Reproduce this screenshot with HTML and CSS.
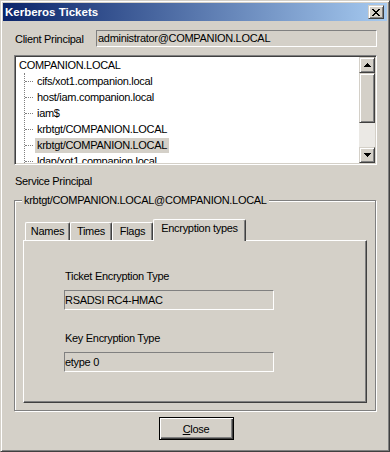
FILE: index.html
```html
<!doctype html>
<html lang="en">
<head>
	<meta charset="UTF-8">
	<title>Kerberos Tickets</title>
	<link rel="stylesheet" href="styles.css">
</head>
<body>
	<div class="window">
	  <div class="titlebar">
	    <span class="titlebar__text">Kerberos Tickets</span>
	    <button class="titlebar__close">
	      <svg width="8" height="7" viewBox="0 0 8 7" shape-rendering="crispEdges"><path d="M0 0h2v1h1v1h2v-1h1v-1h2v1h-1v1h-1v1h-1v1h1v1h1v1h1v1h-2v-1h-1v-1h-2v1h-1v1h-2v-1h1v-1h1v-1h1v-1h-1v-1h-1v-1h-1z" fill="#000"/></svg>
	    </button>
	  </div>
	  <div class="dialog">
	    <div class="row">
	      <span class="label label--client">Client Principal</span>
	      <div class="field field--client">administrator@COMPANION.LOCAL</div>
	    </div>

	    <div class="treebox">
	      <div class="tree">
	        <div class="tree__row tree__row--root"><span class="tree__label">COMPANION.LOCAL</span></div>
	        <ul class="tree__children">
	          <li class="tree__row"><span class="tree__label">cifs/xot1.companion.local</span></li>
	          <li class="tree__row"><span class="tree__label">host/iam.companion.local</span></li>
	          <li class="tree__row"><span class="tree__label">iam$</span></li>
	          <li class="tree__row"><span class="tree__label">krbtgt/COMPANION.LOCAL</span></li>
	          <li class="tree__row"><span class="tree__label is-selected">krbtgt/COMPANION.LOCAL</span></li>
	          <li class="tree__row"><span class="tree__label">ldap/xot1.companion.local</span></li>
	        </ul>
	      </div>
	      <div class="scrollbar">
	        <div class="scrollbar__btn">
	          <svg width="7" height="4" viewBox="0 0 7 4" shape-rendering="crispEdges"><path d="M3 0h1v1h1v1h1v1h1v1h-7v-1h1v-1h1v-1h1z" fill="#000"/></svg>
	        </div>
	        <div class="scrollbar__thumb"></div>
	        <div class="scrollbar__track"></div>
	        <div class="scrollbar__btn">
	          <svg width="7" height="4" viewBox="0 0 7 4" shape-rendering="crispEdges"><path d="M0 0h7v1h-1v1h-1v1h-1v1h-1v-1h-1v-1h-1v-1h-1z" fill="#000"/></svg>
	        </div>
	      </div>
	    </div>

	    <div class="label label--service">Service Principal</div>

	    <fieldset class="group">
	      <legend class="group__title">krbtgt/COMPANION.LOCAL@COMPANION.LOCAL</legend>
	      <div class="tabs">
	        <div class="tab tab--names">Names</div>
	        <div class="tab tab--times">Times</div>
	        <div class="tab tab--flags">Flags</div>
	        <div class="tab tab--enc is-active">Encryption types</div>
	      </div>
	      <div class="tabpanel">
	        <div class="label label--panel">Ticket Encryption Type</div>
	        <div class="field field--panel">RSADSI RC4-HMAC</div>
	        <div class="label label--panel label--second">Key Encryption Type</div>
	        <div class="field field--panel">etype 0</div>
	      </div>
	    </fieldset>

	    <div class="actions">
	      <button class="button button--default"><u>C</u>lose</button>
	    </div>
	  </div>
	</div>
</body>
</html>
```

FILE: styles.css
```css
* {
  box-sizing: border-box;
}

html,
body {
  margin: 0;
  height: 100%;
}

body {
  background-color: #d4d0c8;
  color: #000;
  font-family: "Liberation Sans", Arial, sans-serif;
  font-size: 11px;
  letter-spacing: -0.3px;
}

.window {
  background-color: #d4d0c8;
  border: 1px solid;
  border-color: #d4d0c8 #404040 #404040 #d4d0c8;
  box-shadow: inset 1px 1px #fff, inset -1px -1px #808080;
  height: 100vh;
  padding: 2px;
}

/* title bar */
.titlebar {
  align-items: center;
  background-image: linear-gradient(to right, #0a246a, #a6caf0);
  color: #fff;
  display: flex;
  height: 18px;
  justify-content: space-between;
  padding: 0 3px 0 2px;
}

.titlebar__text {
  font-size: 11.5px;
  font-weight: bold;
  letter-spacing: 0;
}

.titlebar__close {
  align-items: center;
  background-color: #d4d0c8;
  border: 1px solid;
  border-color: #d4d0c8 #404040 #404040 #d4d0c8;
  box-shadow: inset 1px 1px #fff, inset -1px -1px #808080;
  display: flex;
  height: 14px;
  justify-content: center;
  padding: 0;
  width: 16px;
}

.titlebar__close svg {
  display: block;
}

/* dialog body */
.dialog {
  padding: 9px 10px 0 11px;
}

.label {
  display: block;
  line-height: 14px;
  white-space: nowrap;
}

.row {
  align-items: center;
  display: flex;
}

.label--client {
  margin-left: 1px;
  width: 81px;
}

.field {
  background-color: #d4d0c8;
  border: 1px solid;
  border-color: #808080 #fff #fff #808080;
  white-space: nowrap;
}

.field--client {
  flex: 1;
  height: 17px;
  line-height: 15px;
  padding-left: 1px;
}

/* tree */
.treebox {
  background-color: #fff;
  border: 1px solid;
  border-color: #808080 #fff #fff #808080;
  box-shadow: inset 1px 1px #404040, inset -1px -1px #d4d0c8;
  display: flex;
  height: 110px;
  margin-top: 8px;
  padding: 1px;
}

.tree {
  flex: 1;
  overflow: hidden;
}

.tree__row {
  align-items: center;
  display: flex;
  height: 16px;
}

.tree__row--root {
  padding-left: 1px;
}

.tree__children {
  border-left: 1px dotted #808080;
  list-style: none;
  margin: 0 0 0 8px;
  padding: 0;
}

.tree__children > .tree__row::before {
  border-top: 1px dotted #808080;
  content: "";
  display: block;
  margin-right: 2px;
  width: 8px;
}

.tree__label {
  line-height: 15px;
  padding: 0 2px;
  white-space: nowrap;
}

.tree__label.is-selected {
  background-color: #d4d0c8;
}

/* scrollbar */
.scrollbar {
  display: flex;
  flex-direction: column;
  width: 16px;
}

.scrollbar__btn,
.scrollbar__thumb {
  background-color: #d4d0c8;
  border: 1px solid;
  border-color: #d4d0c8 #404040 #404040 #d4d0c8;
  box-shadow: inset 1px 1px #fff, inset -1px -1px #808080;
}

.scrollbar__btn {
  align-items: center;
  display: flex;
  height: 16px;
  justify-content: center;
}

.scrollbar__thumb {
  height: 50px;
}

.scrollbar__track {
  background-color: #ebe9e5;
  flex: 1;
}

/* group box */
.label--service {
  margin: 9px 0 0 1px;
}

.group {
  border: 1px solid #808080;
  box-shadow: inset 1px 1px #fff, 1px 1px #fff;
  margin: 5px 1px 0 0;
  min-width: 0;
  padding: 12px 8px 7px;
}

.group__title {
  background-color: #d4d0c8;
  line-height: 14px;
  margin-left: -1px;
  padding: 0 2px;
}

/* tabs */
.tabs {
  display: flex;
  height: 22px;
  margin-bottom: -1px;
  padding-left: 2px;
}

.tab {
  background-color: #d4d0c8;
  border-left: 1px solid #fff;
  border-right: 1px solid #404040;
  border-top: 1px solid #fff;
  border-top-left-radius: 2px;
  border-top-right-radius: 2px;
  box-shadow: inset -1px 0 #808080;
  height: 18px;
  line-height: 16px;
  margin-top: 3px;
  text-align: center;
}

.tab--names {
  width: 45px;
}

.tab--times {
  width: 42px;
}

.tab--flags {
  width: 41px;
}

.tab--enc {
  width: 93px;
}

.tab.is-active {
  height: 22px;
  line-height: 17px;
  margin-top: 0;
  position: relative;
  z-index: 1;
}

.tabpanel {
  border: 1px solid;
  border-color: #fff #404040 #404040 #fff;
  box-shadow: inset -1px -1px #808080;
  height: 163px;
  padding: 28px 0 0 40px;
}

.label--panel {
  margin-left: 1px;
}

.label--second {
  margin-top: 21px;
}

.field--panel {
  height: 20px;
  line-height: 18px;
  margin-top: 7px;
  width: 210px;
}

/* buttons */
.actions {
  display: flex;
  justify-content: center;
  margin-top: 6px;
  padding-left: 1px;
}

.button {
  background-color: #d4d0c8;
  color: #000;
  font-family: inherit;
  font-size: 11px;
  height: 23px;
  letter-spacing: inherit;
  padding: 0;
  width: 75px;
}

.button--default {
  border: 1px solid #000;
  box-shadow: inset 1px 1px #fff, inset -1px -1px #404040, inset -2px -2px #808080;
}
```
